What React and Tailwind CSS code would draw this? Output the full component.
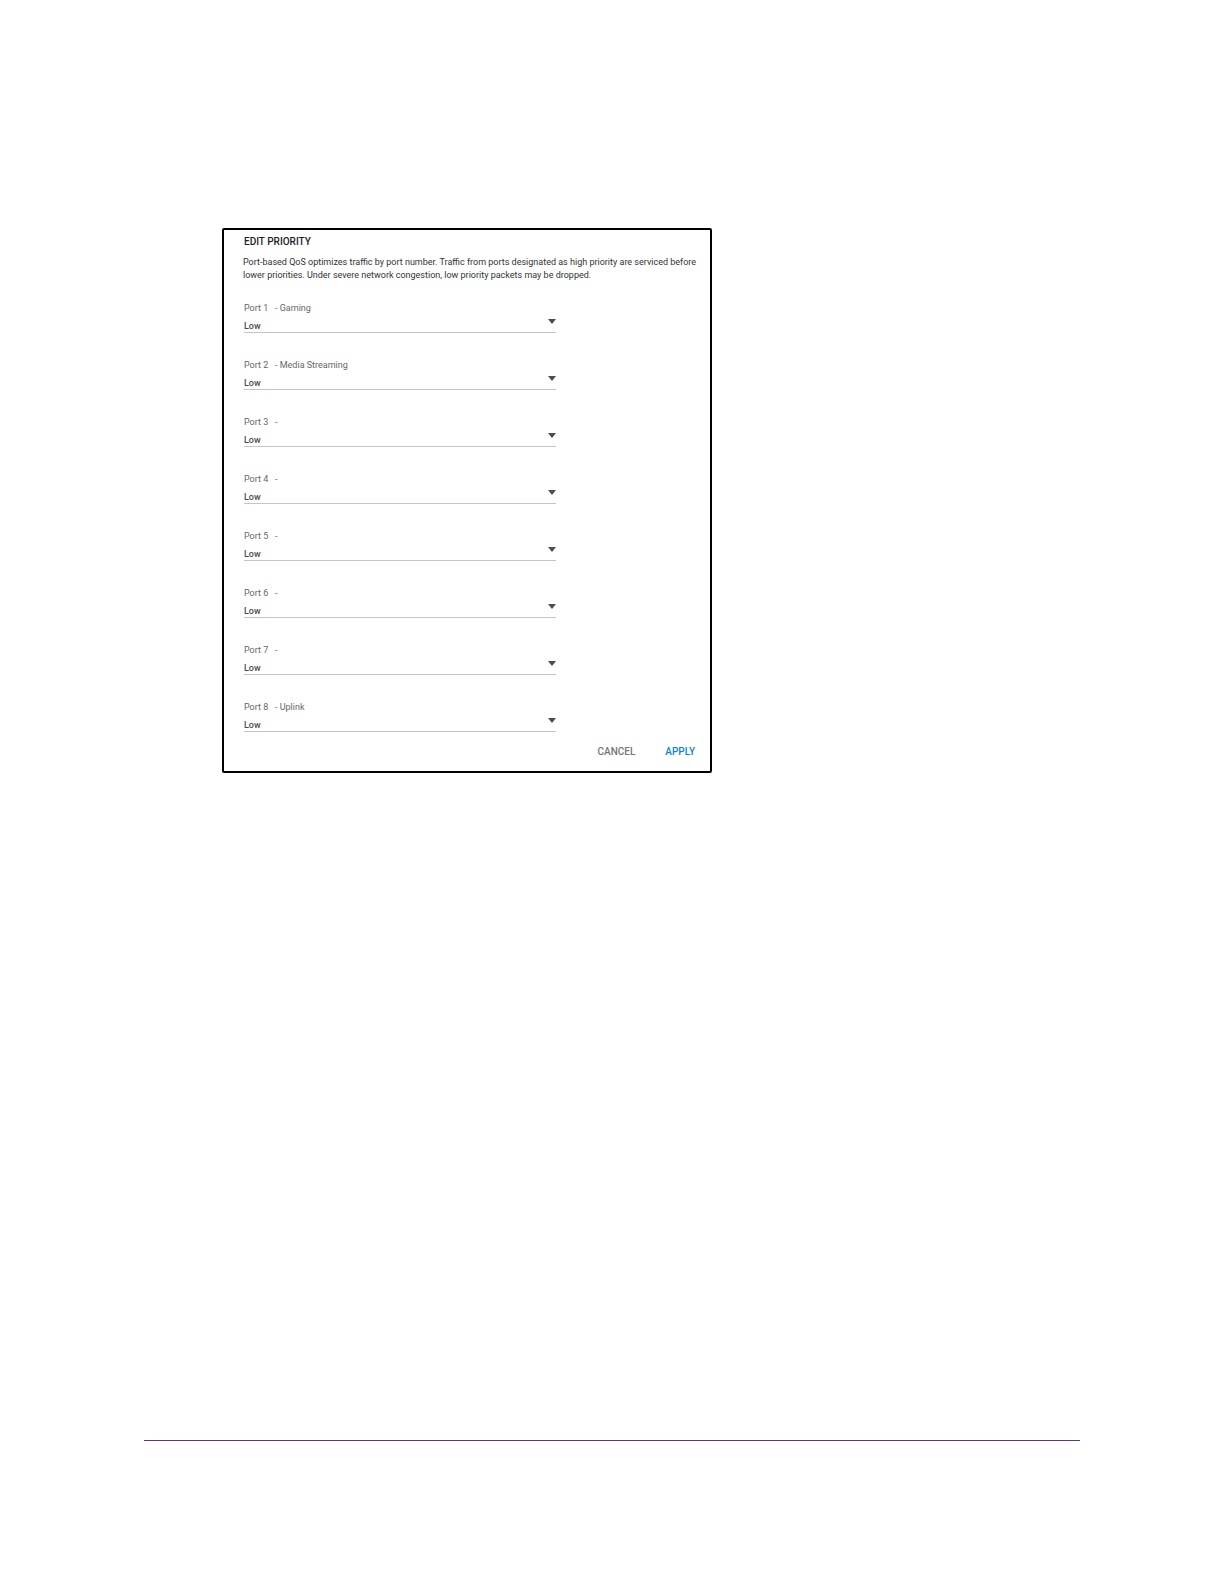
import React, { useState } from 'react';

const ports = [
  { id: 1, name: 'Gaming' },
  { id: 2, name: 'Media Streaming' },
  { id: 3, name: '' },
  { id: 4, name: '' },
  { id: 5, name: '' },
  { id: 6, name: '' },
  { id: 7, name: '' },
  { id: 8, name: 'Uplink' },
];

const PortPriority = ({ port, value, onChange }) => {
  const fieldId = `port-${port.id}`;

  return (
    <div className="flex flex-col">
      <label htmlFor={fieldId} className="flex text-[9px] leading-[14px] text-[#666]">
        <span className="w-[31px] shrink-0">Port {port.id}</span>
        <span>- {port.name}</span>
      </label>
      <div className="relative">
        <select
          id={fieldId}
          value={value}
          onChange={(e) => onChange(e.target.value)}
          className="block h-[18px] w-full appearance-none rounded-none border-b border-[#c4c4c4] bg-transparent pt-1.5 text-[9px] leading-[11px] font-medium text-[#4a4a4a]"
        >
          <option value="low">Low</option>
          <option value="medium">Medium</option>
          <option value="high">High</option>
        </select>
        <svg viewBox="0 0 8 5" className="pointer-events-none absolute top-1 right-0 h-[5px] w-2 fill-[#4d4d4d]">
          <path d="M0 0h8L4 5z" />
        </svg>
      </div>
    </div>
  );
};

const App = () => {
  const [priorities, setPriorities] = useState({});

  const handleChange = (id, value) => {
    setPriorities({ ...priorities, [id]: value });
  };

  return (
    <main className="flex min-h-screen flex-col bg-white px-36 pt-[228px] pb-[143px] font-['Roboto',sans-serif]">
      <form
        onSubmit={(e) => e.preventDefault()}
        className="ml-[78px] flex w-full max-w-[490px] flex-col rounded-xs border-2 border-black pt-1 pb-[11px] pl-5"
      >
        <h1 className="text-[10px] leading-4 font-medium text-[#222]">EDIT PRIORITY</h1>
        <p className="mt-[6px] -ml-px max-w-[460px] text-[9px] leading-[13px] text-[#333]">
          Port-based QoS optimizes traffic by port number. Traffic from ports designated as high priority are serviced
          before lower priorities. Under severe network congestion, low priority packets may be dropped.
        </p>

        <div className="mt-[19px] flex max-w-[312px] flex-col gap-[25px]">
          {ports.map((port) => (
            <PortPriority
              key={port.id}
              port={port}
              value={priorities[port.id] || 'low'}
              onChange={(value) => handleChange(port.id, value)}
            />
          ))}
        </div>

        <div className="mt-3 flex justify-end gap-[30px] pr-[15px] text-[10px] leading-4 font-medium">
          <button type="button" className="text-[#757575]">CANCEL</button>
          <button type="submit" className="text-[#0a84d6]">APPLY</button>
        </div>
      </form>

      <footer className="mt-auto border-t border-[#653570]" />
    </main>
  );
};

export default App;
